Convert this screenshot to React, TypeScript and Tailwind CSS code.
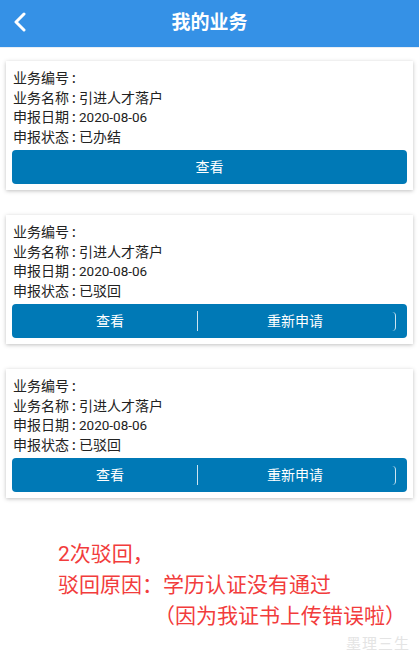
import React from "react";

type Item = {
  name: string;
  date: string;
  status: string;
  rejected: boolean;
};

const items: Item[] = [
  { name: "引进人才落户", date: "2020-08-06", status: "已办结", rejected: false },
  { name: "引进人才落户", date: "2020-08-06", status: "已驳回", rejected: true },
  { name: "引进人才落户", date: "2020-08-06", status: "已驳回", rejected: true },
];

const font = { fontFamily: 'Roboto, "Noto Sans CJK SC", sans-serif' };

function Row({ label, children }: { label: string; children?: React.ReactNode }) {
  return (
    <div className="flex items-baseline whitespace-nowrap">
      <span>{label}</span>
      <span className="inline-block w-[10px] pl-[3px] font-medium">:</span>
      {children}
    </div>
  );
}

function Card({ item }: { item: Item }) {
  return (
    <div className="bg-white mx-[6px] px-[6px] pt-[8px] pb-[6px] shadow-[0_1px_4px_rgba(0,0,0,0.25)]">
      <div className="text-[14px] leading-[19.5px] text-[#222] pl-[1px]">
        <Row label="业务编号" />
        <Row label="业务名称">{item.name}</Row>
        <Row label="申报日期">
          <span className="text-[13.5px]">{item.date}</span>
        </Row>
        <Row label="申报状态">{item.status}</Row>
      </div>
      <div className="mt-[3px] h-[34px] bg-[#0079b6] rounded-[4px] text-white text-[14px] flex items-center">
        {item.rejected ? (
          <>
            <div className="w-[185px] pl-[11px] text-center">查看</div>
            <div className="w-px h-[20px] bg-white/80" />
            <div className="flex-1 text-center">重新申请</div>
            <div className="w-[4px] h-[19px] border-r border-white/80 rounded-r-full mr-[11px]" />
          </>
        ) : (
          <div className="flex-1 text-center">查看</div>
        )}
      </div>
    </div>
  );
}

export default function App() {
  return (
    <div className="w-[419px] h-[659px] bg-white overflow-hidden" style={font}>
      <header className="h-[48px] bg-[#3591e6] border-b border-[#e8eef5] flex items-center relative">
        <svg className="absolute left-[13px] top-[12px]" width="14" height="20" viewBox="0 0 14 20">
          <path d="M11 2 L3 10 L11 18" fill="none" stroke="white" strokeWidth="3" strokeLinecap="round" strokeLinejoin="round" />
        </svg>
        <h1 className="flex-1 text-center text-white text-[19px] font-bold">我的业务</h1>
      </header>

      <div className="pt-[13px] flex flex-col gap-[25px]">
        {items.map((it, i) => (
          <Card key={i} item={it} />
        ))}
      </div>

      <div className="mt-[41px] pl-[58px] text-[21px] leading-[31px] text-[#f23c3c]">
        <div>2次驳回，</div>
        <div>驳回原因：学历认证没有通过</div>
        <div className="pl-[96px]">（因为我证书上传错误啦）</div>
      </div>

      <div className="flex justify-end pr-[9px] mt-[1px]">
        <span className="text-[15px] text-[#e4e4e4] tracking-[1px]">墨理三生</span>
      </div>
    </div>
  );
}
